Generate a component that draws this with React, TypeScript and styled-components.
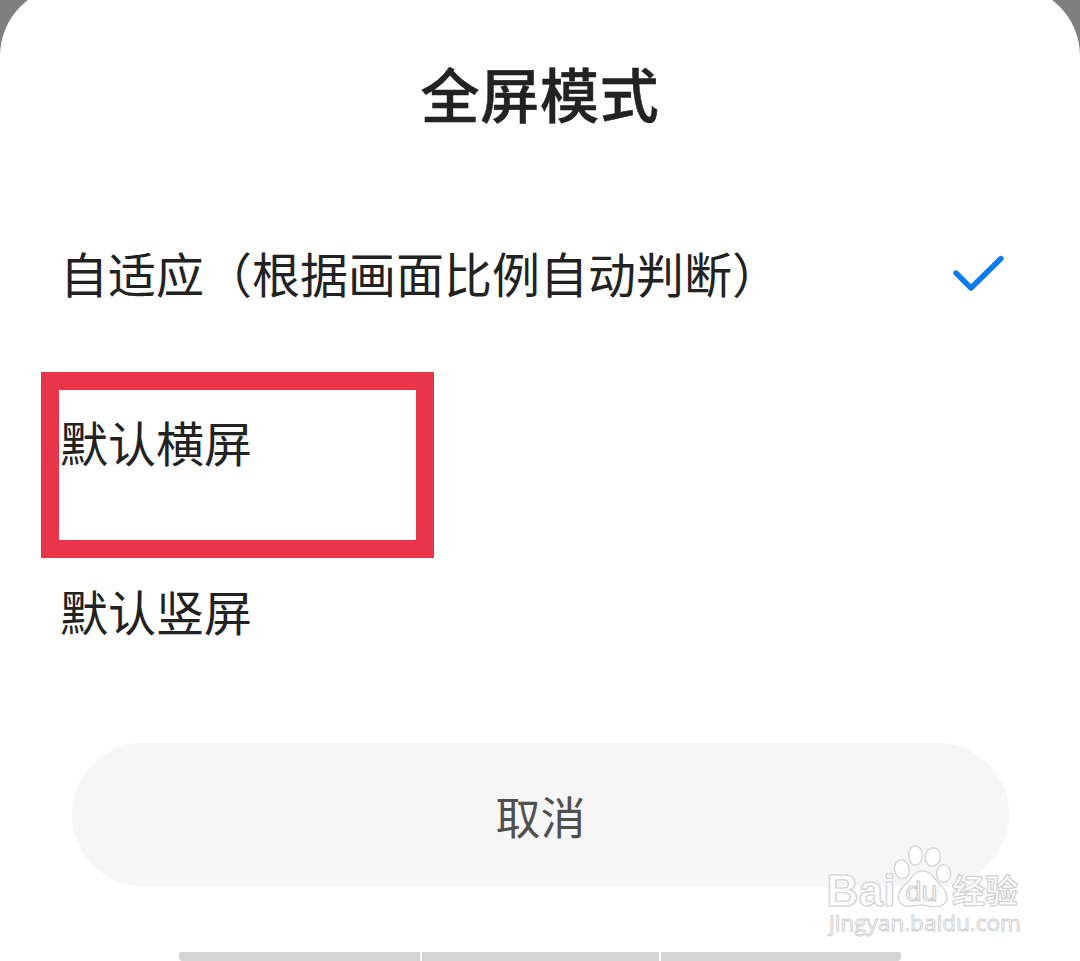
import React, { useState } from 'react';
import styled, { createGlobalStyle } from 'styled-components';

const colors = {
  backdrop: '#7f7f7f',
  sheet: '#fefefe',
  text: '#222222',
  cancelText: '#505050',
  cancel: '#f6f6f6',
  accent: '#0c7bee',
  highlight: '#e93549',
  keyboard: '#d4d4d4',
  watermark: '#d0d0d0',
};

const GlobalStyle = createGlobalStyle`
  * {
    box-sizing: border-box;
  }

  body {
    margin: 0;
    background: ${colors.backdrop};
    font-family: 'Noto Sans CJK SC', 'Noto Sans', sans-serif;
  }
`;

const Screen = styled.div`
  position: relative;
  height: 961px;
  overflow: hidden;
`;

const Sheet = styled.div`
  display: flex;
  flex-direction: column;
  height: 975px;
  margin-top: -14px;
  padding-top: 14px;
  border-radius: 70px 70px 0 0;
  background: ${colors.sheet};
`;

const Title = styled.h1`
  margin: 0;
  height: 192px;
  padding-top: 48px;
  font-size: 59px;
  font-weight: 500;
  line-height: 90px;
  letter-spacing: 0.8px;
  text-align: center;
  color: ${colors.text};
  -webkit-text-stroke: 0.5px ${colors.text};
`;

const Options = styled.ul`
  margin: 0;
  padding: 0;
  list-style: none;
`;

const Option = styled.li`
  position: relative;
  display: flex;
  align-items: center;
  justify-content: space-between;
  height: 169px;
  padding: 0 75px 9px 60px;
  font-size: 48px;
  line-height: 72px;
  color: ${colors.text};
  cursor: pointer;
`;

const Highlight = styled.div`
  position: absolute;
  top: 11px;
  left: 41px;
  width: 393px;
  height: 186px;
  border: 18px solid ${colors.highlight};
  pointer-events: none;
`;

const CancelButton = styled.button`
  width: 937px;
  height: 143px;
  margin: 44px 0 0 72px;
  padding: 3px 0 0;
  border: none;
  border-radius: 72px;
  background: ${colors.cancel};
  font-family: inherit;
  font-size: 45px;
  line-height: 66px;
  color: ${colors.cancelText};
`;

const BottomBar = styled.div`
  display: flex;
  gap: 2px;
  width: 722px;
  margin: 66px 0 0 179px;
`;

const BarSegment = styled.div`
  flex: 1;
  height: 9px;
  background: ${colors.keyboard};

  &:first-child {
    border-radius: 2px 0 0 4px;
  }

  &:nth-child(2) {
    flex: 0 0 237px;
  }

  &:last-child {
    border-radius: 0 2px 4px 0;
  }
`;

const WatermarkSvg = styled.svg`
  position: absolute;
  top: 830px;
  left: 810px;
  fill: #fdfdfd;
  stroke: ${colors.watermark};
  stroke-width: 1.2;
`;

const CheckIcon = () => (
  <svg width='54' height='40' viewBox='0 0 54 40' fill='none'>
    <path
      d='M5 21 L20 36 L50 6.5'
      stroke={colors.accent}
      strokeWidth='5.4'
      strokeLinecap='round'
      strokeLinejoin='round'
    />
  </svg>
);

const Watermark = () => (
  <WatermarkSvg width='230' height='120' viewBox='0 0 230 120'>
    <ellipse cx='105.5' cy='25.5' rx='6.8' ry='9.7' />
    <ellipse cx='122.8' cy='27' rx='7.6' ry='9.2' transform='rotate(8 122.8 27)' />
    <ellipse cx='91.8' cy='39.3' rx='7.3' ry='9.5' transform='rotate(-8 91.8 39.3)' />
    <ellipse cx='133.6' cy='43.5' rx='7.2' ry='8.8' />
    <path d='M113 41 C105 40.5 102 47 98 52 C94 56 88 60 88.3 67 C88.7 74 94 77 100 76.3 C107 75.3 111 74.6 117 75.5 C124 77.5 134 78 136.5 70 C138.5 62 133 58 128.5 53 C123.5 47.5 121.5 41.5 113 41 Z' />
    <text
      x='16.5'
      y='75.5'
      fontFamily='Liberation Sans, sans-serif'
      fontSize='44'
      fontWeight='700'
      textLength='69'
      lengthAdjust='spacingAndGlyphs'
    >
      Bai
    </text>
    <text
      x='95.5'
      y='70.5'
      fontFamily='Liberation Sans, sans-serif'
      fontSize='27'
      textLength='32'
      lengthAdjust='spacingAndGlyphs'
    >
      du
    </text>
    <text x='142' y='73' fontSize='33' fontWeight='700'>
      经验
    </text>
    <text
      x='19'
      y='101'
      fontFamily='Open Sans, sans-serif'
      fontSize='22'
      textLength='192'
      lengthAdjust='spacingAndGlyphs'
      strokeWidth='0.9'
    >
      jingyan.baidu.com
    </text>
  </WatermarkSvg>
);

type Mode = {
  id: string;
  label: string;
  highlighted?: boolean;
};

const modes: Mode[] = [
  { id: 'auto', label: '自适应（根据画面比例自动判断）' },
  { id: 'landscape', label: '默认横屏', highlighted: true },
  { id: 'portrait', label: '默认竖屏' },
];

const App = () => {
  const [selected, setSelected] = useState<string>('auto');

  return (
    <>
      <GlobalStyle />
      <Screen>
        <Sheet>
          <Title>全屏模式</Title>
          <Options>
            {modes.map(({ id, label, highlighted }) => (
              <Option key={id} onClick={() => setSelected(id)}>
                {label}
                {selected === id && <CheckIcon />}
                {highlighted && <Highlight />}
              </Option>
            ))}
          </Options>
          <CancelButton type='button'>取消</CancelButton>
          <BottomBar>
            <BarSegment />
            <BarSegment />
            <BarSegment />
          </BottomBar>
        </Sheet>
        <Watermark />
      </Screen>
    </>
  );
};

export default App;
